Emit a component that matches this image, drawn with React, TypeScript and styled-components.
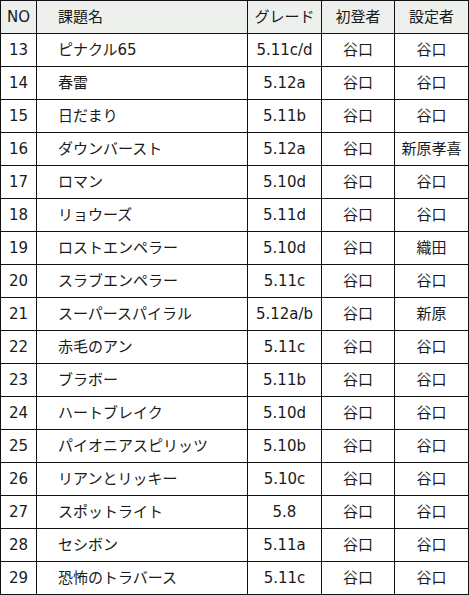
import React from "react";
import styled, { createGlobalStyle } from "styled-components";

const GlobalStyle = createGlobalStyle`
  html, body { margin: 0; padding: 0; background: #ffffff; }
  body {
    font-family: "DejaVu Sans", "Noto Sans CJK JP", sans-serif;
    font-size: 15px;
    color: #1a1a1a;
  }
`;

type Row = { no: number; name: string; grade: string; first: string; setter: string };

const rows: Row[] = [
  { no: 13, name: "ピナクル65", grade: "5.11c/d", first: "谷口", setter: "谷口" },
  { no: 14, name: "春雷", grade: "5.12a", first: "谷口", setter: "谷口" },
  { no: 15, name: "日だまり", grade: "5.11b", first: "谷口", setter: "谷口" },
  { no: 16, name: "ダウンバースト", grade: "5.12a", first: "谷口", setter: "新原孝喜" },
  { no: 17, name: "ロマン", grade: "5.10d", first: "谷口", setter: "谷口" },
  { no: 18, name: "リョウーズ", grade: "5.11d", first: "谷口", setter: "谷口" },
  { no: 19, name: "ロストエンペラー", grade: "5.10d", first: "谷口", setter: "織田" },
  { no: 20, name: "スラブエンペラー", grade: "5.11c", first: "谷口", setter: "谷口" },
  { no: 21, name: "スーパースパイラル", grade: "5.12a/b", first: "谷口", setter: "新原" },
  { no: 22, name: "赤毛のアン", grade: "5.11c", first: "谷口", setter: "谷口" },
  { no: 23, name: "ブラボー", grade: "5.11b", first: "谷口", setter: "谷口" },
  { no: 24, name: "ハートブレイク", grade: "5.10d", first: "谷口", setter: "谷口" },
  { no: 25, name: "パイオニアスピリッツ", grade: "5.10b", first: "谷口", setter: "谷口" },
  { no: 26, name: "リアンとリッキー", grade: "5.10c", first: "谷口", setter: "谷口" },
  { no: 27, name: "スポットライト", grade: "5.8", first: "谷口", setter: "谷口" },
  { no: 28, name: "セシボン", grade: "5.11a", first: "谷口", setter: "谷口" },
  { no: 29, name: "恐怖のトラバース", grade: "5.11c", first: "谷口", setter: "谷口" },
];

const Table = styled.div`
  display: grid;
  grid-template-columns: 36px 211px 74px 73px 74px;
  grid-auto-rows: 33px;
  width: 469px;
  box-sizing: border-box;
  border-left: 1px solid #111;
  border-top: 1px solid #111;
`;

const Cell = styled.div<{ $header?: boolean; $left?: boolean }>`
  box-sizing: border-box;
  display: flex;
  align-items: center;
  justify-content: ${(p) => (p.$left ? "flex-start" : "center")};
  padding-left: ${(p) => (p.$left ? "21px" : "0")};
  border-right: 1px solid #111;
  border-bottom: 1px solid #111;
  background: ${(p) => (p.$header ? "#edf0ed" : "#ffffff")};
  white-space: nowrap;
  line-height: 1;
`;

export default function App() {
  return (
    <>
      <GlobalStyle />
      <Table>
        <Cell $header>NO</Cell>
        <Cell $header $left>課題名</Cell>
        <Cell $header>グレード</Cell>
        <Cell $header>初登者</Cell>
        <Cell $header>設定者</Cell>
        {rows.map((r) => (
          <React.Fragment key={r.no}>
            <Cell>{r.no}</Cell>
            <Cell $left>{r.name}</Cell>
            <Cell>{r.grade}</Cell>
            <Cell>{r.first}</Cell>
            <Cell>{r.setter}</Cell>
          </React.Fragment>
        ))}
      </Table>
    </>
  );
}
